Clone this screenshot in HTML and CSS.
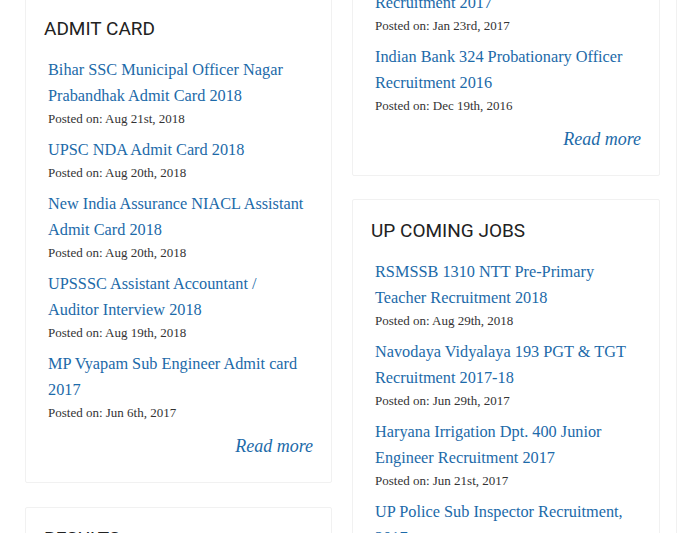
FILE: index.html
```html
<!DOCTYPE html>
<html lang="en">
<head>
<meta charset="utf-8">
<title>Jobs</title>
<link rel="stylesheet" href="styles.css">
</head>
<body>
<div class="page">
  <div class="col col-left">
    <section class="card">
      <h2 class="card-title">ADMIT CARD</h2>
      <ul class="posts">
        <li><a class="post-link" href="#">Bihar SSC Municipal Officer Nagar Prabandhak Admit Card 2018</a><div class="posted">Posted on: Aug 21st, 2018</div></li>
        <li><a class="post-link" href="#">UPSC NDA Admit Card 2018</a><div class="posted">Posted on: Aug 20th, 2018</div></li>
        <li><a class="post-link" href="#">New India Assurance NIACL Assistant Admit Card 2018</a><div class="posted">Posted on: Aug 20th, 2018</div></li>
        <li><a class="post-link" href="#">UPSSSC Assistant Accountant / Auditor Interview 2018</a><div class="posted">Posted on: Aug 19th, 2018</div></li>
        <li><a class="post-link" href="#">MP Vyapam Sub Engineer Admit card 2017</a><div class="posted">Posted on: Jun 6th, 2017</div></li>
      </ul>
      <div class="more"><a href="#">Read more</a></div>
    </section>
    <section class="card">
      <h2 class="card-title">RESULTS</h2>
    </section>
  </div>
  <div class="col col-right">
    <section class="card">
      <h2 class="card-title">RECRUITMENT</h2>
      <ul class="posts">
        <li><a class="post-link" href="#">Rajasthan Patwari 4207 Post<br>Recruitment 2017</a><div class="posted">Posted on: Jan 23rd, 2017</div></li>
        <li><a class="post-link" href="#">Indian Bank 324 Probationary Officer Recruitment 2016</a><div class="posted">Posted on: Dec 19th, 2016</div></li>
      </ul>
      <div class="more"><a href="#">Read more</a></div>
    </section>
    <section class="card">
      <h2 class="card-title">UP COMING JOBS</h2>
      <ul class="posts">
        <li><a class="post-link" href="#">RSMSSB 1310 NTT Pre-Primary Teacher Recruitment 2018</a><div class="posted">Posted on: Aug 29th, 2018</div></li>
        <li><a class="post-link" href="#">Navodaya Vidyalaya 193 PGT &amp; TGT Recruitment 2017-18</a><div class="posted">Posted on: Jun 29th, 2017</div></li>
        <li><a class="post-link" href="#">Haryana Irrigation Dpt. 400 Junior Engineer Recruitment 2017</a><div class="posted">Posted on: Jun 21st, 2017</div></li>
        <li><a class="post-link" href="#">UP Police Sub Inspector Recruitment, 2017</a><div class="posted">Posted on: Jun 12th, 2017</div></li>
      </ul>
    </section>
  </div>
  <div class="col col-third">
    <section class="card card-edge"></section>
  </div>
</div>
</body>
</html>
```
FILE: styles.css
```css
html, body {
  margin: 0;
  padding: 0;
  background: #ffffff;
  overflow: hidden;
}
.page {
  display: flex;
  align-items: flex-start;
  gap: 20px;
  padding-left: 25px;
  height: 533px;
  overflow: hidden;
}
.col {
  display: flex;
  flex-direction: column;
  gap: 24px;
  flex: none;
}
.col-left {
  width: 307px;
  margin-top: -3px;
}
.col-right {
  width: 308px;
  margin-top: -96px;
  gap: 23px;
}
.col-third {
  width: 200px;
  margin-top: -3px;
  margin-left: -4px;
}
.card {
  box-sizing: border-box;
  background: #fff;
  border: 1px solid #f1f1f1;
  border-radius: 2px;
  padding: 19px 18px 23px 18px;
}
.card-edge {
  height: 600px;
}
.card-title {
  margin: 0;
  font-family: Roboto, "Liberation Sans", sans-serif;
  font-weight: 400;
  font-size: 19px;
  line-height: 24px;
  color: #222;
}
.posts {
  list-style: none;
  margin: 16px 0 0 0;
  padding: 0 5px 0 4px;
}
.posts li + li {
  margin-top: 8px;
}
.post-link {
  display: block;
  font-family: "Liberation Serif", serif;
  font-size: 16.3px;
  line-height: 26px;
  color: #1c6aa9;
  text-decoration: none;
}
.posted {
  font-family: "Liberation Serif", serif;
  font-size: 13px;
  line-height: 20px;
  color: #333;
}
.more {
  margin-top: 10px;
  text-align: right;
  font-family: "Liberation Serif", serif;
  font-style: italic;
  font-size: 18px;
  line-height: 26px;
}
.more a {
  color: #1c6aa9;
  text-decoration: none;
}
```
